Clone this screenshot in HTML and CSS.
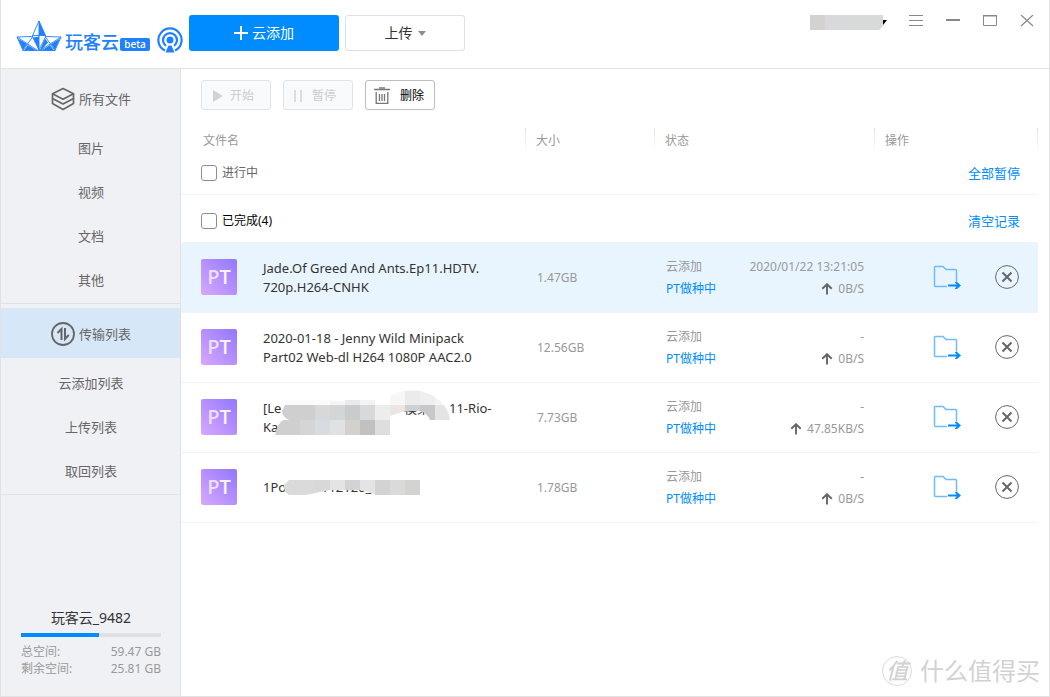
FILE: index.html
```html
<!DOCTYPE html>
<html lang="zh-CN">
<head>
<meta charset="utf-8">
<title>玩客云</title>
<link rel="stylesheet" href="styles.css">
</head>
<body>
<svg class="defs" width="0" height="0" aria-hidden="true">
  <defs>
    <symbol id="i-folder" viewBox="0 0 28 24">
      <path d="M14 21.500H2.500a1 1 0 0 1-1-1V2.500a1 1 0 0 1 1-1H10l3 3H22.500a1 1 0 0 1 1 1V16" fill="none" stroke="#6dbcff" stroke-width="1.500"/>
      <path d="M15 20.500h11M22.500 17l4 3.500-4 3.500" fill="none" stroke="#008cff" stroke-width="2"/>
    </symbol>
    <symbol id="i-remove" viewBox="0 0 24 24">
      <circle cx="12" cy="12" r="11.400" fill="none" stroke="#666" stroke-width="1"/>
      <path d="M7.500 7.500l9 9M16.500 7.500l-9 9" stroke="#666" stroke-width="2"/>
    </symbol>
    <symbol id="i-up" viewBox="0 0 12 12">
      <path d="M6 11.500V1.500M1.300 5.800L6 1.200 10.700 5.800" fill="none" stroke="#666" stroke-width="1.900"/>
    </symbol>
  </defs>
</svg>
<div class="app">
  <header class="topbar">
    <div class="brand">
      <svg class="boat" width="46" height="32" viewBox="0 0 46 32">
        <path d="M23 1L16.500 15.500V17L23 30L29.500 17V15.500ZM16.500 15.500H29.500M23 1V30M1 17L16 16.500M1 17L7 30.500H39L45 17L30 16.500M1 17L21 30M45 17L25 30M7 30.500L16.500 17M39 30.500L29.500 17" fill="none" stroke="#2080ff" stroke-width=".9"/>
        <path d="M23 1L29.500 15.500H23ZM23 16.500V30L17 17.500ZM2 18.500L11 24L7 30ZM8 30.500L12 25L20.500 30.500ZM44 18.500L35 24L39 30ZM38 30.500L34 25L25.500 30.500ZM29 18.500L24 30H25.500L32 22.500Z" fill="#2080ff"/>
      </svg>
      <span class="brand-name">玩客云</span>
      <span class="beta">beta</span>
      <svg class="cast" width="26" height="26" viewBox="0 0 26 26">
        <g fill="none" stroke="#2080ff" stroke-width="2.200">
          <path d="M8 23.500A11.600 11.600 0 1 1 18 23.500"/>
          <path d="M9 18.800A7 7 0 1 1 17 18.800"/>
        </g>
        <circle cx="13" cy="13" r="3.500" fill="#2080ff"/>
        <path d="M11.500 18.500H14.500L17.500 25.500H8.500Z" fill="#2080ff"/>
      </svg>
    </div>
    <button class="btn-main">
      <svg width="14" height="14" viewBox="0 0 14 14"><path d="M7 0V14M0 7H14" stroke="#fff" stroke-width="2"/></svg>
      云添加
    </button>
    <button class="btn-upload">上传 <span class="caret"></span></button>
    <div class="window-tools">
      <svg class="account" width="78" height="16" viewBox="0 0 78 16">
        <path d="M0 0h15v15H0z" fill="#d3d2d0"/><path d="M15 0h16v15H15z" fill="#d9d9dc"/>
        <path d="M31 0h42v11l-4 4H31z" fill="#d8dada"/><path d="M73 5h4l-4 5z" fill="#000"/>
      </svg>
      <button aria-label="菜单"><svg width="14" height="14" viewBox="0 0 14 14"><path d="M0 .5h14M0 5.500h14M0 10.500h14" stroke="#85888e"/></svg></button>
      <button aria-label="最小化"><svg width="14" height="14" viewBox="0 0 14 14"><path d="M0 5h14" stroke="#85888e" stroke-width="2"/></svg></button>
      <button aria-label="最大化"><svg width="14" height="14" viewBox="0 0 14 14"><path d="M.5 0V10.500h13V0" fill="none" stroke="#85888e"/><path d="M0 0h14" stroke="#85888e" stroke-width="3"/></svg></button>
      <button aria-label="关闭"><svg width="14" height="14" viewBox="0 0 14 14"><path d="M1 0l12 11M13 0L1 11" stroke="#85888e" stroke-width="1.200"/></svg></button>
    </div>
  </header>
  <div class="body">
    <aside class="sidebar">
      <nav class="nav-group">
        <a class="nav-head" href="#">
          <svg width="24" height="24" viewBox="0 0 24 24"><g fill="none" stroke="#666" stroke-width="1.700" stroke-linejoin="round"><path d="M12 1.500L22.500 6.800 12 12.200 1.500 6.800Z"/><path d="M1.500 6.800V11.500L12 17l10.500-5.500V6.800M1.500 11.500V16.500L12 22.500 22.500 16.500V11.500"/></g></svg>
          所有文件
        </a>
        <ul>
          <li><a href="#">图片</a></li>
          <li><a href="#">视频</a></li>
          <li><a href="#">文档</a></li>
          <li><a href="#">其他</a></li>
        </ul>
      </nav>
      <nav class="nav-group">
        <a class="nav-head current" href="#">
          <svg width="24" height="24" viewBox="0 0 24 24"><circle cx="12" cy="12" r="11" fill="none" stroke="#666" stroke-width="1.800"/><path d="M10.500 18V7L6.500 11M14 6V17L17.800 13" fill="none" stroke="#666" stroke-width="2"/></svg>
          传输列表
        </a>
        <ul>
          <li><a href="#">云添加列表</a></li>
          <li><a href="#">上传列表</a></li>
          <li><a href="#">取回列表</a></li>
        </ul>
      </nav>
      <section class="storage">
        <h2>玩客云_9482</h2>
        <div class="meter"><div class="meter-fill"></div></div>
        <dl>
          <dt>总空间:</dt><dd>59.47 GB</dd>
          <dt>剩余空间:</dt><dd>25.81 GB</dd>
        </dl>
      </section>
    </aside>
    <main class="content">
      <div class="toolbar">
        <button disabled><svg width="16" height="18" viewBox="0 0 16 18"><path d="M3 3l10 6-10 6z" fill="#d0d3d6"/></svg>开始</button>
        <button disabled><svg width="16" height="18" viewBox="0 0 16 18"><path d="M3 3v12M9 3v12" stroke="#d0d3d6" stroke-width="1.500"/></svg>暂停</button>
        <button class="delete"><svg width="16" height="18" viewBox="0 0 16 18"><g fill="none" stroke="#777" stroke-width="1.300"><path d="M0 2.500h16M5 .8h6M2.200 5v11.300h11.600V5M5.500 7v7M8 7v7M10.500 7v7"/></g></svg>删除</button>
      </div>
      <table class="files">
        <colgroup><col><col class="c-size"><col class="c-state"><col class="c-ops"></colgroup>
        <thead>
          <tr><th>文件名</th><th>大小</th><th>状态</th><th>操作</th></tr>
        </thead>
        <tbody>
          <tr class="group"><td colspan="4"><div class="group-bar"><label><input type="checkbox">进行中</label><a href="#">全部暂停</a></div></td></tr>
          <tr class="group done"><td colspan="4"><div class="group-bar"><label><input type="checkbox">已完成(4)</label><a href="#">清空记录</a></div></td></tr>
          <tr class="file selected">
            <td><div class="file-name"><span class="pt">P<b>T</b></span><p>Jade.Of Greed And Ants.Ep11.HDTV.<br>720p.H264-CNHK</p></div></td>
            <td>1.47GB</td>
            <td><div class="state"><span>云添加</span><span>2020/01/22 13:21:05</span><a href="#">PT做种中</a><span><svg width="12" height="12"><use href="#i-up"/></svg>0B/S</span></div></td>
            <td><div class="ops"><button aria-label="打开文件夹"><svg width="28" height="24"><use href="#i-folder"/></svg></button><button aria-label="移除"><svg width="24" height="24"><use href="#i-remove"/></svg></button></div></td>
          </tr>
          <tr class="file">
            <td><div class="file-name"><span class="pt">P<b>T</b></span><p>2020-01-18 - Jenny Wild Minipack<br>Part02 Web-dl H264 1080P AAC2.0</p></div></td>
            <td>12.56GB</td>
            <td><div class="state"><span>云添加</span><span>-</span><a href="#">PT做种中</a><span><svg width="12" height="12"><use href="#i-up"/></svg>0B/S</span></div></td>
            <td><div class="ops"><button aria-label="打开文件夹"><svg width="28" height="24"><use href="#i-folder"/></svg></button><button aria-label="移除"><svg width="24" height="24"><use href="#i-remove"/></svg></button></div></td>
          </tr>
          <tr class="file">
            <td><div class="file-name"><span class="pt">P<b>T</b></span><p><span class="lead">[Le</span><span class="tail">模某</span>11-Rio-<br>Ka</p>
              <svg class="mask" width="240" height="70" viewBox="0 0 240 70">
                <path d="M20 17h50v5H20z" fill="#fbfbfb"/><path d="M67 18h15v4H67z" fill="#f4f4f4"/><path d="M82 17h15v5H82z" fill="#eaeaea"/><path d="M97 17h15v5H97z" fill="#f3f3f3"/>
                <path d="M127 13Q134 9 142 8V22H127z" fill="#f7f7f7"/><path d="M142 8Q150 7 157 8V22H142z" fill="#ebebeb"/><path d="M157 8Q165 10 172 14V22H157z" fill="#eee"/><path d="M172 14Q178 18 181 22H172z" fill="#f4f4f4"/>
                <path d="M22 22H52V37H26Q19 34 19 28Z" fill="#cfcfcf"/><path d="M52 22h15v15H52z" fill="#d9d8d8"/><path d="M67 22h15v15H67z" fill="#d3d6d6"/><path d="M82 22h15v15H82z" fill="#c8cccc"/><path d="M97 22h15v15H97z" fill="#d8d9da"/><path d="M112 22h15v15H112z" fill="#ededed"/><path d="M127 22h15v6l-15 5z" fill="#ebe6e3"/>
                <path d="M142 22h15v6h-15z" fill="#cdd1d6"/><path d="M157 22h15v15h-5q-3-7-10-9z" fill="#c9c7ca"/><path d="M172 22h9q5 7 6 15h-15z" fill="#e5e5e7"/><path d="M127 34h39v4h-39z" fill="#fff"/>
                <path d="M20 37H37V52H12Q14 41 20 37Z" fill="#cfcfcf"/><path d="M37 37h15v15H37z" fill="#d5d5d5"/><path d="M52 37h15v15H52z" fill="#d8dce0"/><path d="M67 37h15v15H67z" fill="#e0e2e2"/><path d="M82 37h15v15H82z" fill="#d3d1ce"/><path d="M97 37h15v15H97z" fill="#c1c1c1"/><path d="M112 37h15v15H112z" fill="#dededf"/>
              </svg></div></td>
            <td>7.73GB</td>
            <td><div class="state"><span>云添加</span><span>-</span><a href="#">PT做种中</a><span><svg width="12" height="12"><use href="#i-up"/></svg>47.85KB/S</span></div></td>
            <td><div class="ops"><button aria-label="打开文件夹"><svg width="28" height="24"><use href="#i-folder"/></svg></button><button aria-label="移除"><svg width="24" height="24"><use href="#i-remove"/></svg></button></div></td>
          </tr>
          <tr class="file">
            <td><div class="file-name"><span class="pt">P<b>T</b></span><p><span class="lead short">1Po</span>112120_</p>
              <svg class="mask" width="240" height="70" viewBox="0 0 240 70">
                <path d="M26 27H52V40Q46 42 40 42H26Q20 38 21 32Z" fill="#dadada"/><path d="M52 27h15v10l-15 3z" fill="#d8d8d8"/><path d="M67 27h15v10H67z" fill="#e4e4e2"/><path d="M82 27h15v10H82z" fill="#d3d3d5"/><path d="M97 27h15v14l-15-4z" fill="#e4e4e4"/><path d="M112 27h15v15H112z" fill="#d3d3d3"/><path d="M127 27h15v15H127z" fill="#dadada"/><path d="M142 27h15v15H142z" fill="#d3d3d1"/>
              </svg></div></td>
            <td>1.78GB</td>
            <td><div class="state"><span>云添加</span><span>-</span><a href="#">PT做种中</a><span><svg width="12" height="12"><use href="#i-up"/></svg>0B/S</span></div></td>
            <td><div class="ops"><button aria-label="打开文件夹"><svg width="28" height="24"><use href="#i-folder"/></svg></button><button aria-label="移除"><svg width="24" height="24"><use href="#i-remove"/></svg></button></div></td>
          </tr>
        </tbody>
      </table>
    </main>
  </div>
  <div class="watermark"><span class="seal">值</span>什么值得买</div>
</div>
</body>
</html>
```
FILE: styles.css
```css
* { box-sizing: border-box; }
body { margin: 0; background: #fff; color: #333; font: 13px/20px "Noto Sans", "Noto Sans CJK SC", sans-serif; }
a { color: #008cff; text-decoration: none; }
button { font: inherit; color: inherit; margin: 0; padding: 0; border: 0; background: none; cursor: pointer; }
ul, dl, dd, p, h2 { margin: 0; padding: 0; list-style: none; }
svg { display: block; flex: none; }
.defs { position: absolute; }

.app { position: relative; display: flex; flex-direction: column; min-height: 100vh; border: 1px solid #e2e2e4; border-top: 0; }

.topbar { display: flex; align-items: flex-start; height: 69px; padding: 15px 15px 0 15px; border-bottom: 1px solid #e2e3e6; }
.brand { display: flex; align-items: flex-end; width: 173px; height: 38px; color: #2080ff; }
.brand-name { margin: 0 0 1px 3px; font-size: 18px; font-weight: 500; line-height: 20px; }
.beta { width: 30px; height: 13px; margin: 0 0 2px 1px; border-radius: 2px; background: #2080ff; color: #fff; font-size: 10px; font-weight: 500; line-height: 12px; text-align: center; }
.boat { margin-bottom: 1px; }
.cast { margin-left: 7px; }
.btn-main, .btn-upload { display: flex; align-items: center; justify-content: center; height: 36px; border-radius: 3px; font-size: 14px; }
.btn-main { gap: 4px; width: 150px; background: #008cff; color: #fff; }
.btn-upload { gap: 5px; width: 120px; margin-left: 6px; border: 1px solid #dfe0e6; background: #fff; }
.caret { border: 4px solid transparent; border-top: 5px solid #8c8c8c; border-bottom: 0; }
.window-tools { display: flex; align-items: flex-start; gap: 23px; margin-left: auto; }
.account { margin-right: -2px; }
.window-tools button { height: 14px; }

.body { display: flex; flex: 1; }
.sidebar { display: flex; flex-direction: column; width: 180px; border-right: 1px solid #dfe1e5; background: #f0f1f5; }
.nav-group { padding: 4px 0 2px; border-bottom: 1px solid #dfe1e5; }
.nav-group a { display: flex; align-items: center; justify-content: center; height: 44px; padding: 1px 0 0 1px; color: #666; }
.nav-group .nav-head { gap: 4px; height: 50px; margin-bottom: 2px; }
.nav-group .current { background: #d6e8f8; }
.storage { margin: auto 19px 19px 20px; color: #999; font-size: 12px; line-height: 17px; }
.storage h2 { margin-bottom: 5px; color: #333; font-size: 14px; font-weight: 400; line-height: 20px; text-align: center; }
.meter { height: 4px; margin-bottom: 6px; background: #dde1e5; }
.meter-fill { width: 56%; height: 4px; background: #008cff; }
.storage dl { display: grid; grid-template-columns: 1fr auto; }

.content { flex: 1; padding: 11px 11px 0 0; }
.toolbar { display: flex; gap: 12px; padding-left: 20px; margin-bottom: 18px; font-size: 12px; }
.toolbar button { display: flex; align-items: center; gap: 4px; width: 70px; height: 30px; padding: 1px 0 0 8px; border: 1px solid #bfbfbf; border-radius: 3px; color: #000; }
.toolbar .delete { gap: 10px; }
.toolbar button:disabled { border-color: #e0e3e8; background: #f9fafc; color: #ccc; }

.files { width: 100%; border-collapse: separate; border-spacing: 0; table-layout: fixed; font-size: 12px; color: #999; }
.c-size { width: 129px; }
.c-state { width: 220px; }
.c-ops { width: 164px; }
.files th { height: 24px; padding: 2px 0 0 11px; font-weight: 400; text-align: left; background: linear-gradient(#e2e2e2, #fff) left / 1px 100% no-repeat; }
.files th:first-child { padding-left: 22px; background: none; }
.files th:last-child { background: linear-gradient(#e2e2e2, #fff) left / 1px 100% no-repeat, linear-gradient(#e2e2e2, #fff) right / 1px 100% no-repeat; }
.files td { padding: 0; border-bottom: 1px solid #f2f3f5; }
.group-bar { display: flex; align-items: center; justify-content: space-between; height: 42px; padding: 0 18px 0 20px; }
.group-bar label { display: flex; align-items: center; gap: 5px; color: #666; }
.group-bar a { font-size: 13px; }
.group-bar input { appearance: none; width: 16px; height: 16px; margin: 0; border: 1px solid #8c8c8c; border-radius: 3px; background: #fff; }
.done .group-bar { height: 47px; padding-top: 5px; }
.done label { color: #000; }
.file td { height: 70px; }
.file td:nth-child(2) { padding-left: 12px; }
.selected td { background: #e8f5ff; }
.file-name { position: relative; display: flex; align-items: center; gap: 26px; height: 69px; padding-left: 20px; color: #333; font-size: 13px; line-height: 19px; white-space: nowrap; }
.pt { width: 36px; height: 36px; margin-bottom: 2px; border-radius: 2px; background: linear-gradient(to top right, #d8a8ff, #9278ff); color: #ecdfff; font: 600 20px/36px "Open Sans", sans-serif; text-align: center; }
.pt b { font-weight: 600; color: #f8f3ff; }
.lead { display: inline-block; width: 141px; }
.short { width: 58px; }
.tail { display: inline-block; width: 45px; }
.mask { position: absolute; left: 82px; top: 0; }
.state { display: grid; grid-template-columns: 1fr auto; row-gap: 2px; padding: 0 10px 0 12px; }
.state > :nth-child(even) { display: flex; align-items: center; justify-content: flex-end; gap: 5px; }
.ops { display: flex; align-items: center; justify-content: flex-end; gap: 34px; padding: 0 19px 2px 0; }

.watermark { position: absolute; right: 9px; bottom: 8px; display: flex; align-items: center; gap: 8px; color: #d2d2d2; font-size: 24px; line-height: 34px; }
.seal { width: 30px; height: 30px; border: 1px solid #dcdcdc; border-radius: 50%; font-size: 22px; font-style: italic; font-weight: 500; line-height: 27px; text-align: center; }
```
